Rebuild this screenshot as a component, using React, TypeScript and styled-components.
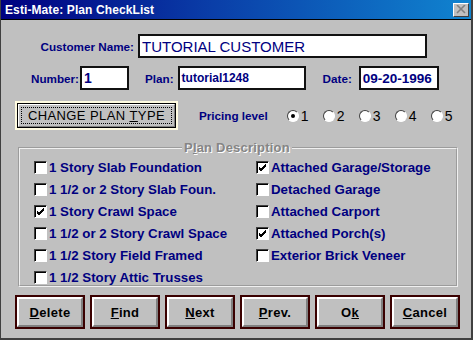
import styled, { createGlobalStyle } from "styled-components";

const GlobalStyle = createGlobalStyle`
  html, body {
    margin: 0;
    padding: 0;
    background: #c0c0c0;
  }
  * {
    box-sizing: border-box;
  }
`

const Window = styled.div`
  width: 473px;
  height: 340px;
  background-color: #c0c0c0;
  border-left: 1px solid #404040;
  border-right: 2px solid #404040;
  border-bottom: 2px solid #404040;
  font-family: "Liberation Sans", Arial, sans-serif;
  display: flex;
  flex-direction: column;
  overflow: hidden;
`

const TitleBar = styled.div`
  height: 20px;
  flex-shrink: 0;
  background: linear-gradient(to right, #000080 0%, #0a3ea8 45%, #1084d0 100%);
  border-bottom: 1px solid #000;
  display: flex;
  align-items: center;
  justify-content: space-between;
  padding: 0 2px 0 4px;
`

const Title = styled.span`
  color: #fff;
  font-weight: bold;
  font-size: 12px;
  letter-spacing: 0.1px;
`

const CloseButton = styled.div`
  width: 16px;
  height: 14px;
  background: #c0c0c0;
  border-top: 1px solid #fff;
  border-left: 1px solid #fff;
  border-right: 1px solid #404040;
  border-bottom: 1px solid #404040;
  display: flex;
  align-items: center;
  justify-content: center;
`

const Content = styled.div`
  display: flex;
  flex-direction: column;
`

const Row = styled.div<{ $top: number }>`
  display: flex;
  align-items: center;
  margin-top: ${p => p.$top}px;
`

const Label = styled.span<{ $width?: number; $ml?: number }>`
  color: #000080;
  font-weight: bold;
  font-size: 11.7px;
  ${p => p.$width ? `width: ${p.$width}px;` : ""}
  margin-left: ${p => p.$ml ?? 0}px;
  text-align: right;
  white-space: nowrap;
`

const Field = styled.div<{ $width: number; $size?: number; $bold?: boolean }>`
  width: ${p => p.$width}px;
  height: 24px;
  background: #fff;
  border: 2px solid #111;
  color: #000080;
  font-size: ${p => p.$size ?? 14}px;
  font-weight: ${p => (p.$bold ? "bold" : "normal")};
  display: flex;
  align-items: center;
  padding-left: 2px;
  white-space: nowrap;
  overflow: hidden;
`

const PlanTypeButton = styled.div`
  margin-left: 14px;
  width: 163px;
  height: 29px;
  border: 2px solid #fffbe0;
  background: #000;
  padding: 1px;
`

const PlanTypeInner = styled.div`
  height: 100%;
  background: #c0c0c0;
  border-top: 1px solid #fff;
  border-left: 1px solid #fff;
  border-right: 1px solid #808080;
  border-bottom: 1px solid #808080;
  display: flex;
  align-items: center;
  justify-content: center;
  font-size: 13px;
  color: #000;
  letter-spacing: 0.4px;
  outline: 1px dotted #000;
  outline-offset: -4px;
`

const Radios = styled.div`
  display: flex;
  margin-left: 19px;
`

const RadioItem = styled.div`
  display: flex;
  align-items: center;
  width: 36px;
  font-size: 14px;
  color: #000;
`

const RadioCircle = styled.span<{ $on?: boolean }>`
  width: 12px;
  height: 12px;
  border-radius: 50%;
  background: #fff;
  border: 1px solid;
  border-color: #404040 #fff #fff #404040;
  margin-right: 2px;
  display: flex;
  align-items: center;
  justify-content: center;
  &::after {
    content: "";
    width: 4px;
    height: 4px;
    border-radius: 50%;
    background: ${p => (p.$on ? "#000" : "transparent")};
  }
`

const Group = styled.fieldset`
  margin: 10px 0 0 17px;
  width: 440px;
  height: 147px;
  padding: 0 0 0 14px;
  border: 2px groove #f0f0f0;
  display: grid;
  grid-template-columns: 222px 1fr;
  align-content: start;
`

const Legend = styled.legend`
  margin-left: 148px;
  padding: 0 2px;
  color: #858585;
  text-shadow: 1px 1px 0 #fff;
  font-weight: bold;
  font-size: 13px;
  letter-spacing: 0.2px;
`

const Column = styled.div`
  display: flex;
  flex-direction: column;
  margin-top: 1px;
`

const CheckRow = styled.div`
  display: flex;
  align-items: center;
  height: 22px;
  color: #000080;
  font-weight: bold;
  font-size: 13.3px;
  white-space: nowrap;
`

const Box = styled.span`
  width: 13px;
  height: 13px;
  background: #fff;
  border-top: 1px solid #404040;
  border-left: 1px solid #404040;
  border-right: 1px solid #fff;
  border-bottom: 1px solid #fff;
  box-shadow: inset 1px 1px 0 #000;
  margin-right: 2px;
  display: flex;
  align-items: center;
  justify-content: center;
  flex-shrink: 0;
`

const ButtonBar = styled.div`
  display: flex;
  gap: 5px;
  margin: 8px 0 0 14px;
`

const ActionButton = styled.div`
  width: 70px;
  height: 34px;
  border: 2px solid #3a0000;
  background: #c0c0c0;
`

const ActionInner = styled.div`
  height: 100%;
  border-top: 2px solid #fff;
  border-left: 2px solid #fff;
  border-right: 2px solid #808080;
  border-bottom: 2px solid #808080;
  display: flex;
  align-items: center;
  justify-content: center;
  font-weight: bold;
  font-size: 13px;
  color: #000;
  letter-spacing: 0.3px;
`

const Check = () => (
  <svg width="9" height="9" viewBox="0 0 9 9">
    <path d="M1 4 L3 6 L8 1 M1 5 L3 7 L8 2 M1 6 L3 8 L8 3" stroke="#000" strokeWidth="1" fill="none" />
  </svg>
)

const CheckItem = ({ label, checked }: { label: string; checked?: boolean }) => (
  <CheckRow>
    <Box>{checked && <Check />}</Box>
    {label}
  </CheckRow>
)

const Access = ({ text, index }: { text: string; index: number }) => (
  <span>
    {text.slice(0, index)}
    <u>{text[index]}</u>
    {text.slice(index + 1)}
  </span>
)

const leftItems = [
  { label: "1 Story Slab Foundation" },
  { label: "1 1/2 or 2 Story Slab Foun." },
  { label: "1 Story Crawl Space", checked: true },
  { label: "1 1/2 or 2 Story Crawl Space" },
  { label: "1 1/2 Story Field Framed" },
  { label: "1 1/2 Story Attic Trusses" },
]

const rightItems = [
  { label: "Attached Garage/Storage", checked: true },
  { label: "Detached Garage" },
  { label: "Attached Carport" },
  { label: "Attached Porch(s)", checked: true },
  { label: "Exterior Brick Veneer" },
]

const buttons = [
  { text: "Delete", index: 0 },
  { text: "Find", index: 0 },
  { text: "Next", index: 0 },
  { text: "Prev.", index: 0 },
  { text: "Ok", index: 1 },
  { text: "Cancel", index: 0 },
]

export default function App() {
  return (
    <>
      <GlobalStyle />
      <Window>
        <TitleBar>
          <Title>Esti-Mate: Plan CheckList</Title>
          <CloseButton>
            <svg width="10" height="9" viewBox="0 0 10 9">
              <path d="M1 0 L9 8 M9 0 L1 8" stroke="#808080" strokeWidth="1.6" />
            </svg>
          </CloseButton>
        </TitleBar>
        <Content>
          <Row $top={14}>
            <Label $width={133}>Customer Name:</Label>
            <Field $width={289} $size={15} style={{ marginLeft: 4 }}>TUTORIAL CUSTOMER</Field>
          </Row>
          <Row $top={8}>
            <Label $width={78}>Number:</Label>
            <Field $width={49} $size={14} $bold style={{ marginLeft: 1 }}>1</Field>
            <Label $ml={16}>Plan:</Label>
            <Field $width={128} $size={12} $bold style={{ marginLeft: 4 }}>tutorial1248</Field>
            <Label $ml={17}>Date:</Label>
            <Field $width={80} $size={13.5} $bold style={{ marginLeft: 7 }}>09-20-1996</Field>
          </Row>
          <Row $top={11}>
            <PlanTypeButton>
              <PlanTypeInner>
                CHANGE PLAN&nbsp; <u>T</u>YPE
              </PlanTypeInner>
            </PlanTypeButton>
            <Label $ml={21}>Pricing level</Label>
            <Radios>
              {[1, 2, 3, 4, 5].map(n => (
                <RadioItem key={n}>
                  <RadioCircle $on={n === 1} />
                  {n}
                </RadioItem>
              ))}
            </Radios>
          </Row>
          <Group>
            <Legend>
              P<u>l</u>an Description
            </Legend>
            <Column>
              {leftItems.map(i => (
                <CheckItem key={i.label} {...i} />
              ))}
            </Column>
            <Column>
              {rightItems.map(i => (
                <CheckItem key={i.label} {...i} />
              ))}
            </Column>
          </Group>
          <ButtonBar>
            {buttons.map(b => (
              <ActionButton key={b.text}>
                <ActionInner>
                  <Access text={b.text} index={b.index} />
                </ActionInner>
              </ActionButton>
            ))}
          </ButtonBar>
        </Content>
      </Window>
    </>
  )
}
